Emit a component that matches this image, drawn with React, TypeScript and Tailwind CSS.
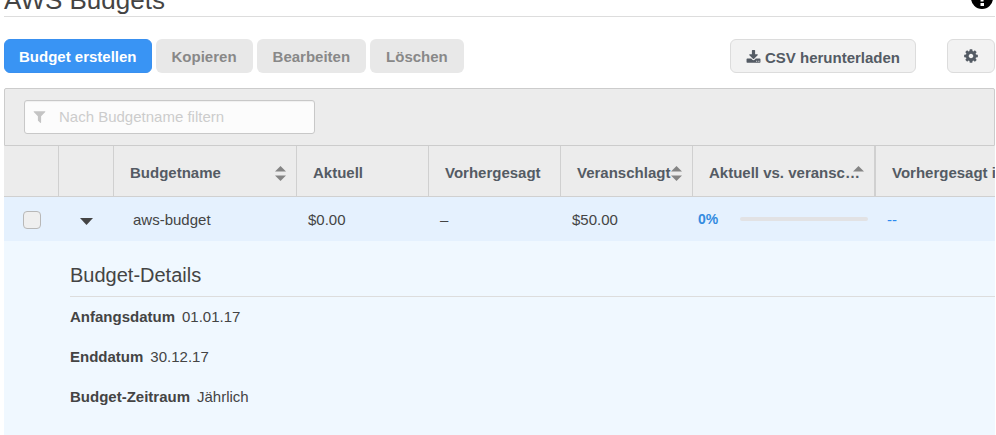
import type { ReactNode } from "react";

const iconPaths = {
  cog: "M1152 896q0-106-75-181t-181-75-181 75-75 181 75 181 181 75 181-75 75-181zm512-109v222q0 12-8 23t-20 13l-185 28q-19 54-39 91 35 50 107 138 10 12 10 25t-9 23q-27 37-99 108t-94 71q-12 0-26-9l-138-108q-44 23-91 38-16 136-29 186-7 28-36 28h-222q-14 0-24.5-8.5t-11.5-21.5l-28-184q-49-16-90-37l-141 107q-10 9-25 9-14 0-25-11-126-114-165-168-7-10-7-23 0-12 8-23 15-21 51-66.5t54-70.5q-27-50-41-99l-183-27q-13-2-21-12.5t-8-23.5v-222q0-12 8-23t19-13l186-28q14-46 39-92-40-57-107-138-10-12-10-24 0-10 9-23 26-36 98.5-107.5t94.5-71.5q13 0 26 10l138 107q44-23 91-38 16-136 29-186 7-28 36-28h222q14 0 24.5 8.5t11.5 21.5l28 184q49 16 90 37l142-107q9-9 24-9 13 0 25 10 129 119 165 170 7 8 7 22 0 12-8 23-15 21-51 66.5t-54 70.5q26 50 41 98l183 28q13 2 21 12.5t8 23.5z",
  download:
    "M1344 1344q0-26-19-45t-45-19-45 19-19 45 19 45 45 19 45-19 19-45zm256 0q0-26-19-45t-45-19-45 19-19 45 19 45 45 19 45-19 19-45zm128-224v320q0 40-28 68t-68 28h-1472q-40 0-68-28t-28-68v-320q0-40 28-68t68-28h465l135 136q58 56 136 56t136-56l136-136h464q40 0 68 28t28 68zm-325-569q17 41-14 70l-448 448q-18 19-45 19t-45-19l-448-448q-31-29-14-70 17-39 59-39h256v-448q0-26 19-45t45-19h256q26 0 45 19t19 45v448h256q42 0 59 39z",
  filter:
    "M1595 295q17 41-14 70l-493 493v742q0 42-39 59-13 5-25 5-27 0-45-19l-256-256q-19-19-19-45v-486l-493-493q-31-29-14-70 17-39 59-39h1280q42 0 59 39z",
};

function Icon({ name, className }: { name: keyof typeof iconPaths; className: string }) {
  return (
    <svg viewBox="0 0 1792 1792" className={`shrink-0 ${className}`} fill="currentColor" aria-hidden="true">
      <path d={iconPaths[name]} />
    </svg>
  );
}

function SortIcon({ direction }: { direction?: "asc" }) {
  return (
    <svg width="11" height="15" viewBox="0 0 11 15" className="shrink-0 text-[#848484]" fill="currentColor" aria-hidden="true">
      <path d="M0 5.5 5.5 0 11 5.5z" />
      {direction !== "asc" && <path d="M0 9.5h11L5.5 15z" />}
    </svg>
  );
}

function HeaderCell({ children, sort, last }: { children: ReactNode; sort?: "both" | "asc"; last?: boolean }) {
  return (
    <th scope="col" className={`h-[51px] border-b border-[#d0d0d0] p-0 text-left font-bold text-[#545b64] ${last ? "" : sort === "asc" ? "border-r-2" : "border-r"}`}>
      {sort ? (
        <button type="button" className="flex w-full items-center pt-1 pr-[10px] pl-4 text-left font-bold whitespace-nowrap">
          <span className="min-w-0 flex-1">{children}</span>
          <SortIcon direction={sort === "asc" ? "asc" : undefined} />
        </button>
      ) : (
        <div className="pt-1 pl-4 whitespace-nowrap">{children}</div>
      )}
    </th>
  );
}

function ActionButton({ children }: { children: ReactNode }) {
  return (
    <button type="button" disabled className="h-[34px] rounded-md bg-[#e8e8e8] px-4 pt-0.5 font-bold text-[#888888]">
      {children}
    </button>
  );
}

const details = [
  { label: "Anfangsdatum", value: "01.01.17" },
  { label: "Enddatum", value: "30.12.17" },
  { label: "Budget-Zeitraum", value: "Jährlich" },
];

export default function App() {
  return (
    <main className="min-h-screen overflow-hidden bg-white pr-px pl-1 font-['Liberation_Sans',Arial,sans-serif] text-[15px] leading-5 text-[#444444]">
      <header className="-mt-4 flex h-[33px] items-start justify-between border-b border-[#dddddd]">
        <h1 className="text-[26px] leading-8">AWS Budgets</h1>
        <button type="button" aria-label="Hilfe" className="mt-[3px] mr-0.5">
          <svg width="22" height="22" viewBox="0 0 22 22" aria-hidden="true">
            <circle cx="11" cy="11" r="11" fill="#000" />
            <path d="M7 7a4 4 0 1 1 6 3.4c-1.4.8-2 1.4-2 4" fill="none" stroke="#fff" strokeWidth="3" />
            <path d="M9.5 16h3.5v3H9.5z" fill="#fff" />
          </svg>
        </button>
      </header>

      <div className="mt-[22px] flex items-center gap-1">
        <button type="button" className="h-[34px] rounded-md border border-[#3990f0] bg-[#3994f4] px-[14px] pt-0.5 font-bold text-white">
          Budget erstellen
        </button>
        <ActionButton>Kopieren</ActionButton>
        <ActionButton>Bearbeiten</ActionButton>
        <ActionButton>Löschen</ActionButton>
        <button type="button" className="ml-auto flex h-[34px] items-center gap-1 rounded-md border border-[#dcdcdc] bg-[#f2f2f2] px-[15px] pt-1 font-bold text-[#545b64]">
          <Icon name="download" className="mb-0.5 size-[15px]" />
          CSV herunterladen
        </button>
        <button type="button" aria-label="Einstellungen" className="ml-[27px] flex h-[34px] w-12 items-center justify-center rounded-md border border-[#dcdcdc] bg-[#f2f2f2] text-[#545b64]">
          <Icon name="cog" className="size-4" />
        </button>
      </div>

      <section className="mt-[15px]">
        <div className="rounded-t-xs border border-[#cccccc] bg-[#ececec] px-[19px] py-[11px]">
          <label className="flex h-[34px] w-[291px] items-center gap-3 rounded-[3px] border border-[#c8c8c8] bg-[#fcfcfc] px-[7px] inset-shadow-xs">
            <Icon name="filter" className="mb-0.5 size-[15px] text-[#c4c4c4]" />
            <input type="text" aria-label="Nach Budgetname filtern" placeholder="Nach Budgetname filtern" className="min-w-0 flex-1 bg-transparent outline-none placeholder:text-[#cccccc]" />
          </label>
        </div>

        <div className="overflow-hidden">
          <table className="w-full min-w-[1056px] table-fixed border-separate border-spacing-0">
            <colgroup>
              <col className="w-[55px]" />
              <col className="w-[55px]" />
              <col className="w-[183px]" />
              <col className="w-[132px]" />
              <col className="w-[132px]" />
              <col className="w-[132px]" />
              <col className="w-[183px]" />
              <col />
            </colgroup>
            <thead className="bg-[#ececec]">
              <tr>
                <td className="border-r border-b border-[#d0d0d0]" />
                <td className="border-r border-b border-[#d0d0d0]" />
                <HeaderCell sort="both">Budgetname</HeaderCell>
                <HeaderCell>Aktuell</HeaderCell>
                <HeaderCell>Vorhergesagt</HeaderCell>
                <HeaderCell sort="both">Veranschlagt</HeaderCell>
                <HeaderCell sort="asc">Aktuell vs. veransc…</HeaderCell>
                <HeaderCell last>Vorhergesagt i</HeaderCell>
              </tr>
            </thead>
            <tbody>
              <tr className="h-11 bg-[#e5f1fe]">
                <td className="p-0 pt-0.5">
                  <input type="checkbox" aria-label="aws-budget auswählen" className="ml-[19px] block size-[18px] appearance-none rounded-[4px] border border-[#b8b8b8] bg-[#efefef]" />
                </td>
                <td className="p-0">
                  <button type="button" aria-label="Details ausblenden" aria-expanded="true" className="ml-[21px] block pt-1">
                    <svg width="13" height="7" viewBox="0 0 13 7" aria-hidden="true">
                      <path d="M0 0h13L6.5 7z" fill="#444" />
                    </svg>
                  </button>
                </td>
                <td className="p-0 pt-0.5 pl-[19px]">aws-budget</td>
                <td className="p-0 pt-0.5 pl-[11px]">$0.00</td>
                <td className="p-0 pt-0.5 pl-[11px]">–</td>
                <td className="p-0 pt-0.5 pl-[11px]">$50.00</td>
                <td className="p-0 pr-2 pl-[5px]">
                  <div className="flex items-center justify-between text-sm font-bold text-[#338be0]">
                    <span>0%</span>
                    <div className="h-1 w-32 rounded-full bg-[#e2e2e4]" />
                  </div>
                </td>
                <td className="p-0 pt-0.5 pl-[11px] text-[#2b8af0]">--</td>
              </tr>
              <tr className="bg-[#f0f8ff]">
                <td colSpan={8} className="p-0 pt-5 pb-8 pl-[66px]">
                  <h2 className="border-b border-[#dddddd] pb-[7px] text-xl leading-7">Budget-Details</h2>
                  <dl className="mt-[10px] flex flex-col gap-5">
                    {details.map(({ label, value }) => (
                      <div key={label} className="flex gap-[7px]">
                        <dt className="font-bold">{label}</dt>
                        <dd>{value}</dd>
                      </div>
                    ))}
                  </dl>
                </td>
              </tr>
            </tbody>
          </table>
        </div>
      </section>
    </main>
  );
}
